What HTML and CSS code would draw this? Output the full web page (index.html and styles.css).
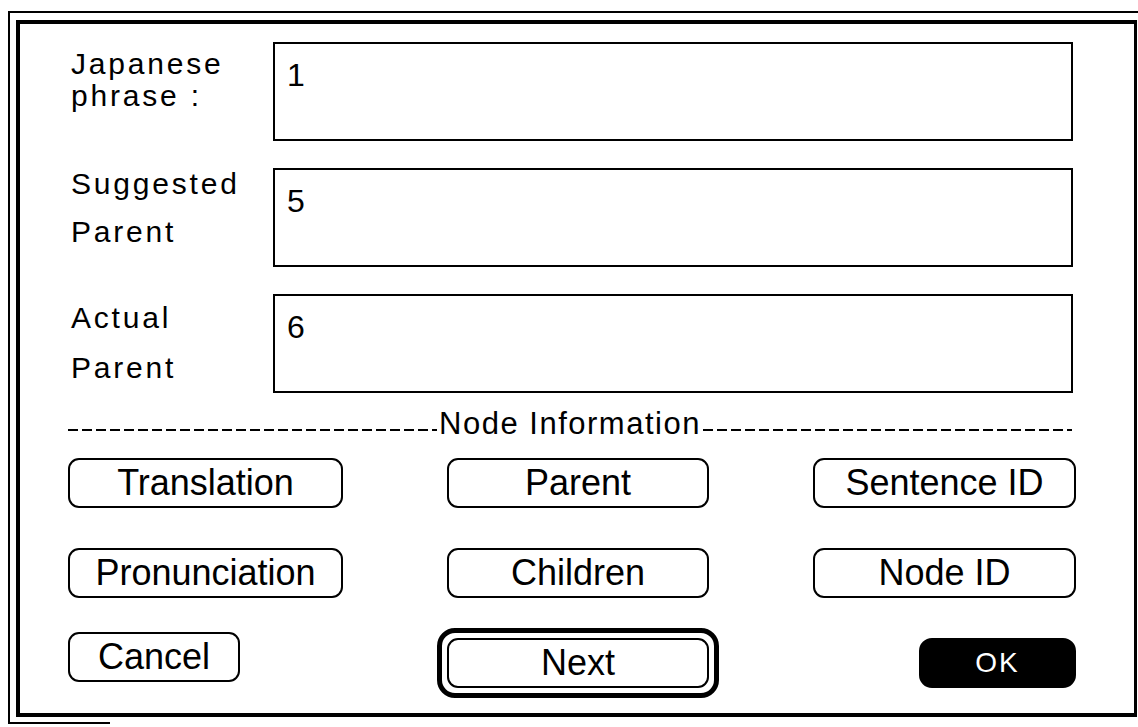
FILE: index.html
```html
<!DOCTYPE html>
<html>
  <head>
    <meta charset="utf-8">
    <title>Node Information</title>
    <link rel="stylesheet" href="styles.css">
  </head>
  <body>
    <div class="screen">
      <div class="dialog">
        <div class="fields">
          <div class="label label-tight">Japanese<br>phrase :</div>
          <div class="field">1</div>
          <div class="label">Suggested<br>Parent</div>
          <div class="field">5</div>
          <div class="label label-actual">Actual<br>Parent</div>
          <div class="field">6</div>
        </div>

        <div class="divider">
          <span class="dash"></span>
          <span class="divider-text">Node Information</span>
          <span class="dash"></span>
        </div>

        <div class="buttons">
          <button class="btn">Translation</button>
          <button class="btn">Parent</button>
          <button class="btn">Sentence ID</button>
          <button class="btn">Pronunciation</button>
          <button class="btn">Children</button>
          <button class="btn">Node ID</button>
          <button class="btn btn-cancel">Cancel</button>
          <div class="next-ring"><button class="btn btn-next">Next</button></div>
          <button class="btn btn-dark">OK</button>
        </div>
      </div>
      <div class="tail"></div>
    </div>
  </body>
</html>
```

FILE: styles.css
```css
body {
  margin: 0;
  padding: 0;
  background-color: #fff;
  color: #000;
  font-family: "Liberation Sans", Arial, sans-serif;
}
.screen {
  box-sizing: border-box;
  width: 1130px;
  margin: 11px 0 0 8px;
  padding: 7px 1px 0 6px;
  border-top: 2px solid #000;
  border-left: 2px solid #000;
}
.dialog {
  box-sizing: border-box;
  height: 697px;
  padding: 18px 0 0 48px;
  border: 4px solid #000;
  border-right-width: 3px;
}
.tail {
  width: 102px;
  height: 2px;
  margin: 5px 0 0 -8px;
  background-color: #000;
}

/* label + text field rows */
.fields {
  display: grid;
  grid-template-columns: 205px 800px;
  grid-auto-rows: 99px;
  row-gap: 27px;
}
.label {
  padding-left: 3px;
  font-size: 30px;
  letter-spacing: 2.8px;
  line-height: 48px;
  margin-top: -8px;
}
.label-tight {
  line-height: 32px;
  margin-top: 6px;
}
.label-actual {
  line-height: 50px;
  margin-top: -1px;
}
.field {
  box-sizing: border-box;
  border: 2px solid #000;
  padding: 15px 12px 0;
  font-size: 32px;
  line-height: 32px;
}

/* ---Node Information--- */
.divider {
  display: flex;
  width: 1004px;
  height: 34px;
  margin-top: 14px;
}
.dash {
  flex: 1;
  align-self: flex-end;
  height: 2px;
  margin-bottom: 10px;
  background: repeating-linear-gradient(to right, #000 0 10px, transparent 10px 14px);
}
.divider-text {
  padding: 0 2px;
  font-size: 31px;
  letter-spacing: 1.5px;
  line-height: 34px;
}

/* buttons */
.buttons {
  display: grid;
  grid-template-columns: 275px 262px 263px;
  grid-template-rows: 50px 50px 50px;
  column-gap: 104px;
  row-gap: 40px;
  margin-top: 17px;
}
.btn {
  box-sizing: border-box;
  height: 50px;
  padding: 0;
  border: 2px solid #000;
  border-radius: 11px;
  background-color: #fff;
  color: #000;
  font-family: "Liberation Sans", Arial, sans-serif;
  font-size: 36px;
  line-height: 46px;
  text-align: center;
}
.btn-cancel {
  width: 172px;
  margin-top: -6px;
}
.next-ring {
  margin: -10px;
  padding: 5px;
  border: 5px solid #000;
  border-radius: 18px;
}
.btn-next {
  width: 100%;
}
.btn-dark {
  justify-self: end;
  width: 157px;
  border-radius: 13px;
  background-color: #000;
  color: #fff;
  font-size: 28px;
  letter-spacing: 2px;
}
```
